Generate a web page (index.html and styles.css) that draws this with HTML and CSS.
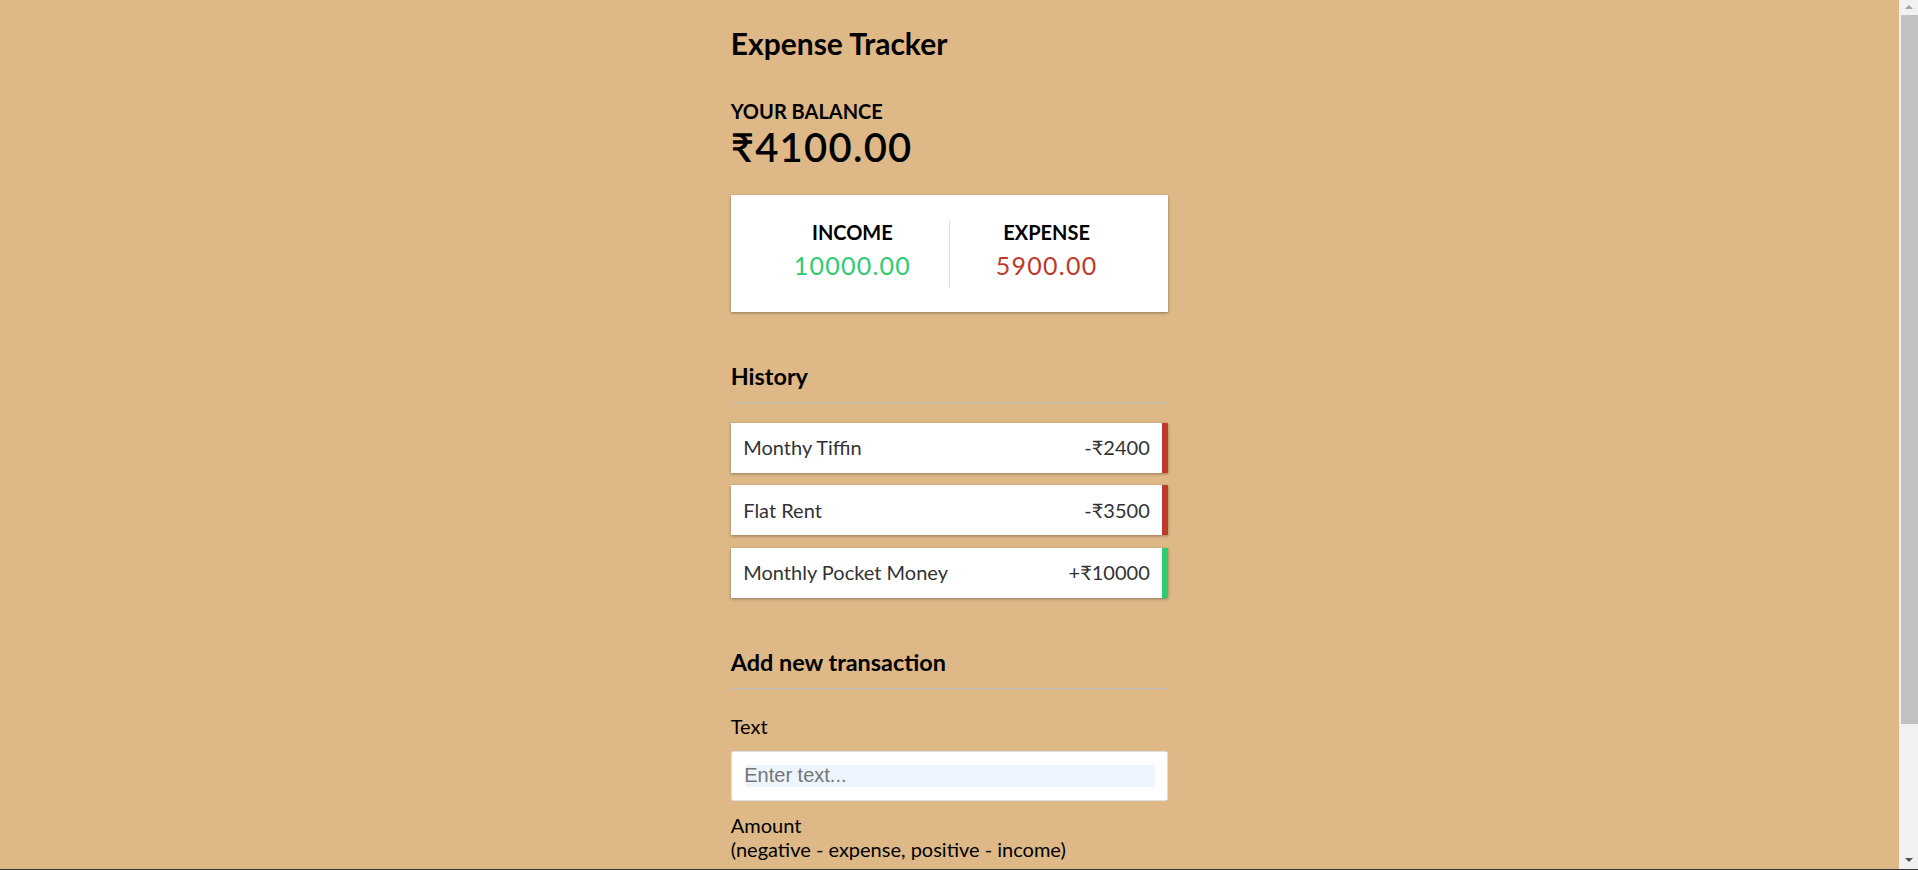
FILE: index.html
```html
<!DOCTYPE html>
<html lang="en">
<head>
<meta charset="UTF-8">
<title>Expense Tracker</title>
<link rel="stylesheet" href="styles.css">
</head>
<body>
<div class="container">
  <h2 class="title">Expense Tracker</h2>

  <h4 class="caption">Your Balance</h4>
  <h1 class="balance">₹4100.00</h1>

  <div class="inc-exp">
    <div class="inc-exp-col first">
      <h4 class="caption">Income</h4>
      <p class="money plus">10000.00</p>
    </div>
    <div class="inc-exp-col">
      <h4 class="caption">Expense</h4>
      <p class="money minus">5900.00</p>
    </div>
  </div>

  <h3 class="section">History</h3>
  <ul class="list">
    <li class="item minus">Monthy Tiffin <span>-₹2400</span></li>
    <li class="item minus">Flat Rent <span>-₹3500</span></li>
    <li class="item plus">Monthly Pocket Money <span>+₹10000</span></li>
  </ul>

  <h3 class="section">Add new transaction</h3>
  <form class="form">
    <div class="form-control">
      <label class="label" for="text">Text</label>
      <input class="field" type="text" id="text" placeholder="Enter text...">
    </div>
    <div class="form-control">
      <label class="label" for="amount">Amount <br>(negative - expense, positive - income)</label>
      <input class="field plain" type="number" id="amount" placeholder="Enter amount...">
    </div>
    <button class="btn" type="button">Add transaction</button>
  </form>
</div>
<div class="scrollbar">
  <div class="sb-arrow up"></div>
  <div class="sb-track"><div class="sb-thumb"></div></div>
  <div class="sb-arrow down"></div>
</div>
<div class="frame-edge"></div>
</body>
</html>
```

FILE: styles.css
```css
* {
  box-sizing: border-box;
}

html,
body {
  scrollbar-width: none;
}

html::-webkit-scrollbar {
  display: none;
}

body {
  margin: 0;
  padding-right: 19px;
  background-color: #deb887;
  font-family: "Lato", "DejaVu Sans", sans-serif;
  color: #000;
}

.container {
  width: 437.5px;
  margin: 0 auto;
  padding: 25px 0 20px;
}

.title {
  font-size: 30px;
  margin: 0 0 37.5px;
  font-weight: 700;
}

.caption {
  font-size: 20px;
  margin: 0;
  text-transform: uppercase;
  font-weight: 700;
}

.balance {
  font-size: 40px;
  letter-spacing: 1.25px;
  margin: 0;
  font-weight: 600;
}

.inc-exp {
  background-color: #fff;
  box-shadow: 0 1.25px 3.75px rgba(0, 0, 0, 0.12), 0 1.25px 2.5px rgba(0, 0, 0, 0.24);
  padding: 25px;
  display: flex;
  justify-content: space-between;
  margin: 24.5px 0 25px;
}

.inc-exp-col {
  flex: 1;
  text-align: center;
}

.inc-exp-col.first {
  border-right: 1px solid #dedede;
}

.money {
  font-size: 25px;
  letter-spacing: 1.25px;
  margin: 6.25px 0;
}

.money.plus {
  color: #2ecc71;
}

.money.minus {
  color: #c0392b;
}

.section {
  font-size: 23.4px;
  font-weight: 700;
  border-bottom: 1.25px solid #bbb;
  padding-bottom: 12.5px;
  margin: 50px 0 12.5px;
}

.list {
  list-style-type: none;
  padding: 0;
  margin: 19.5px 0 50px;
}

.item {
  background-color: #fff;
  box-shadow: 0 1.25px 3.75px rgba(0, 0, 0, 0.12), 0 1.25px 2.5px rgba(0, 0, 0, 0.24);
  color: #333;
  display: flex;
  justify-content: space-between;
  padding: 12.5px;
  margin: 12.5px 0;
  font-size: 20px;
  line-height: 25px;
}

.item.plus {
  border-right: 6.25px solid #2ecc71;
}

.item.minus {
  border-right: 6.25px solid #c0392b;
}

.label {
  display: inline-block;
  margin: 12.5px 0;
  font-size: 20px;
}

.field {
  display: block;
  width: 100%;
  border: 1.25px solid #dedede;
  border-radius: 2.5px;
  font-size: 20px;
  font-family: "Liberation Sans", Arial, sans-serif;
  padding: 12.5px;
  background: linear-gradient(#ecf5fe, #ecf5fe) content-box, #fff;
  color: #333;
  outline: none;
}

.field.plain {
  background: #fff;
}

.field::placeholder {
  color: #757575;
}

.btn {
  cursor: pointer;
  background-color: #9c88ff;
  box-shadow: 0 1.25px 3.75px rgba(0, 0, 0, 0.12), 0 1.25px 2.5px rgba(0, 0, 0, 0.24);
  color: #fff;
  border: 0;
  display: block;
  font-size: 20px;
  margin: 12.5px 0 0;
  padding: 12.5px;
  width: 100%;
  font-family: "Liberation Sans", Arial, sans-serif;
}

/* window scrollbar as captured in the reference */
.scrollbar {
  position: fixed;
  top: 0;
  right: 0;
  bottom: 0;
  width: 19px;
  background: #f1f1f1;
  display: flex;
  flex-direction: column;
}

.sb-arrow {
  height: 15px;
  flex: none;
  position: relative;
}

.sb-arrow::after {
  content: "";
  position: absolute;
  left: 6px;
  width: 0;
  height: 0;
  border-left: 4.5px solid transparent;
  border-right: 4.5px solid transparent;
}

.sb-arrow.up::after {
  top: 5px;
  border-bottom: 4px solid #a3a3a3;
}

.sb-arrow.down::after {
  bottom: 8px;
  border-top: 4px solid #505050;
}

.sb-track {
  flex: 1;
  padding-left: 2px;
}

.sb-thumb {
  height: 709px;
  background: #c1c1c1;
}

.frame-edge {
  position: fixed;
  left: 0;
  right: 0;
  bottom: 0;
  height: 1px;
  background: #3a3a3a;
}
```
